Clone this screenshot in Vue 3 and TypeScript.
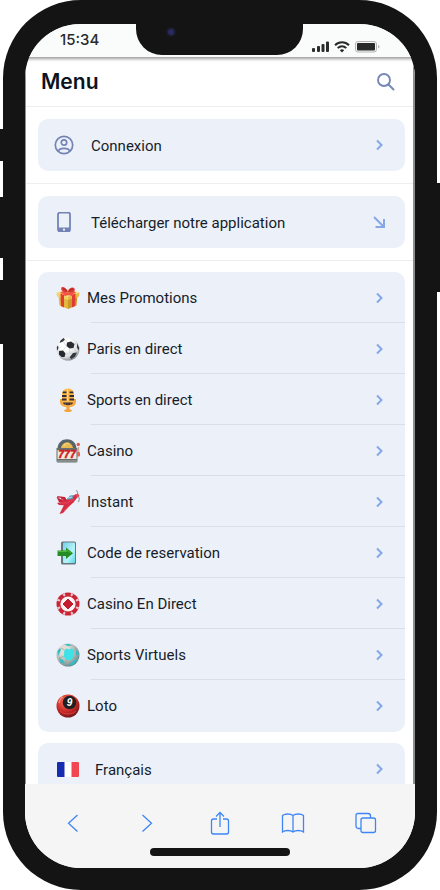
<script setup lang="ts">
interface MenuItem {
  icon: string
  label: string
}

const items: MenuItem[] = [
  { icon: 'gift', label: 'Mes Promotions' },
  { icon: 'football', label: 'Paris en direct' },
  { icon: 'mic', label: 'Sports en direct' },
  { icon: 'slots', label: 'Casino' },
  { icon: 'plane', label: 'Instant' },
  { icon: 'code', label: 'Code de reservation' },
  { icon: 'chip', label: 'Casino En Direct' },
  { icon: 'virtual', label: 'Sports Virtuels' },
  { icon: 'ball', label: 'Loto' },
]

const chipNotches: number[] = [0, 45, 90, 135, 180, 225, 270, 315]
</script>

<template>
  <div class="device">
    <span class="side-key mute"></span>
    <span class="side-key volume-up"></span>
    <span class="side-key volume-down"></span>
    <span class="side-key power"></span>

    <div class="frame">
      <div class="notch"><span class="camera"></span></div>

      <div class="status">
        <time class="clock">15:34</time>
        <div class="indicators">
          <svg width="17" height="12" viewBox="0 0 17 12" fill="#2b2b2b" aria-hidden="true">
            <rect x="0" y="7" width="3" height="4" rx="1" />
            <rect x="5" y="5" width="3" height="6" rx="1" />
            <rect x="9.5" y="3" width="3" height="8" rx="1" />
            <rect x="14" y="0.5" width="3" height="10.500" rx="1" />
          </svg>
          <svg width="16" height="12" viewBox="0 0 16 12" fill="none" stroke="#2b2b2b" stroke-width="2" aria-hidden="true">
            <path d="M1 4.200C5 0.200 11 0.200 15 4.200" />
            <path d="M3.700 7.100C6.200 4.600 9.800 4.600 12.300 7.100" />
            <path d="M5.800 9.200C7.200 8 8.800 8 10.200 9.200L8 11.500Z" fill="#2b2b2b" stroke="none" />
          </svg>
          <svg width="25" height="12" viewBox="0 0 25 12" aria-hidden="true">
            <rect x="0.500" y="0.500" width="21" height="10.500" rx="2.500" fill="#f4f4f1" stroke="#b5b5b5" />
            <rect x="2" y="2" width="18" height="7.500" rx="1" fill="#292929" />
            <path d="M23 4C25 4.500 25 7 23 7.500Z" fill="#b5b5b5" />
          </svg>
        </div>
      </div>

      <div class="page">
        <header class="header">
          <h1>Menu</h1>
          <button class="search" type="button" aria-label="Rechercher">
            <svg width="20" height="20" viewBox="0 0 20 20" fill="none" stroke="#7588b5" stroke-width="1.900" stroke-linecap="round">
              <circle cx="8" cy="8" r="6" />
              <path d="M12.500 12.500L17.500 17.500" />
            </svg>
          </button>
        </header>

        <main class="content">
          <section class="block">
            <a class="card action" href="#connexion">
              <svg class="action-icon" viewBox="0 0 20 20" fill="none" stroke="#7384b4" stroke-width="1.700">
                <circle cx="10" cy="10" r="8.700" />
                <circle cx="10" cy="7.500" r="2.700" />
                <path d="M4.300 16.200C5.500 12.400 14.500 12.400 15.700 16.200" />
              </svg>
              <span class="label">Connexion</span>
              <svg class="chevron" viewBox="0 0 12 12"><path d="M4 1.500L8.500 6L4 10.500" /></svg>
            </a>
          </section>

          <section class="block">
            <a class="card action" href="#application">
              <svg class="action-icon" viewBox="0 0 20 20">
                <rect x="4" y="0.500" width="12" height="19" rx="2" fill="none" stroke="#7384b4" stroke-width="1.800" />
                <path d="M4 15.500H16V18.500Q16 20 14.500 20H5.500Q4 20 4 18.500Z" fill="#7384b4" />
                <circle cx="10" cy="17.700" r="1.100" fill="#edf2fa" />
              </svg>
              <span class="label">Télécharger notre application</span>
              <svg class="chevron" viewBox="0 0 12 12"><path d="M1 1L11 11M11 3V11H2.500" /></svg>
            </a>
          </section>

          <section class="block lists">
            <nav class="card list">
              <a v-for="item in items" :key="item.label" class="row" :href="'#' + item.icon">
                <svg class="row-icon" viewBox="0 0 24 24" aria-hidden="true">
                  <g v-if="item.icon === 'gift'">
                    <path d="M2.500 9L12 12.500V23L3.500 19.500Z" fill="#e3b640" />
                    <path d="M12 12.500L21.500 9L20.500 19.500L12 23Z" fill="#c99829" />
                    <path d="M0.500 6.500L12 10.500V14L1 10.500Z" fill="#f3d067" />
                    <path d="M12 10.500L23.500 6.500L23 10.500L12 14Z" fill="#e6ba45" />
                    <path d="M0.500 6.500L12 3.500L23.500 6.500L12 10.500Z" fill="#f9dc79" />
                    <path d="M4.500 7.500L8 9V21.500L5 20ZM16 9L19.500 7.500L19 20L16 21.500Z" fill="#e33b32" />
                    <path d="M6 5.500L19 8.500L16 10L4 7ZM18 5L20 7L9 10L6.500 8.500Z" fill="#f05444" />
                    <path d="M12 6.500C8 7 4 4.500 5.500 1.500C7 0 10.500 2.500 12 5.500C12.500 2 17 0.500 18.500 2.500C20 5.500 16 7 12 6.500Z" fill="#dc3936" />
                    <path d="M7 3C8.500 2.500 10 4 11 5M17 3C15.500 3 14 4.500 13 5.500" fill="none" stroke="#9f2421" />
                  </g>
                  <g v-else-if="item.icon === 'football'">
                    <defs>
                      <radialGradient id="leather" cx="0.400" cy="0.300" r="0.750">
                        <stop offset="0.300" stop-color="#ffffff" />
                        <stop offset="0.750" stop-color="#d5d7da" />
                        <stop offset="1" stop-color="#777b80" />
                      </radialGradient>
                    </defs>
                    <circle cx="12" cy="12" r="11.500" fill="url(#leather)" />
                    <path d="M11 5.500L15 4.500L18.500 7L17.500 11L13.500 11.500L10.500 9Z" fill="#292d31" />
                    <path d="M3 14L7 13.500L9.500 16.500L8.500 20L5.500 20L3 17.500Z" fill="#25292d" />
                    <path d="M4.500 3.500L7.500 1L9 2.500L7 4.500L3.500 6ZM21 6L23.200 11L22.500 13.500L21 10.500ZM17 16L21 15.500L19 19.500L15.500 22L13.500 20.500ZM0.800 10L2 8.500L2.500 11L1 14Z" fill="#34383c" />
                    <path d="M10.500 9L7 13.500M17.500 11L21 15.500M13.500 11.500L14 16L9.500 16.500M14 16L17 16M11 5.500L9 2.500M18.500 7L21 6M7 4.500L10.500 9" stroke="#c2c5c8" stroke-width="0.500" fill="none" />
                  </g>
                  <g v-else-if="item.icon === 'mic'">
                    <path d="M10.500 19H13.500V21.500C17 21.500 17 24 12 24C7 24 7 21.500 10.500 21.500Z" fill="#f5a238" />
                    <path d="M4 11V14C4 21 20 21 20 14V11H17V16H7V11Z" fill="#f3a73d" />
                    <rect x="6" y="0.500" width="12" height="18" rx="5.500" fill="#ffb84c" />
                    <path d="M7 3.500H10.500V5.300H6.500ZM13.500 3.500H17L17.500 5.300H13.500ZM6 7H10.500V9H6ZM13.500 7H18V9H13.500ZM6 10.500H10.500V12.500H6ZM13.500 10.500H18V12.500H13.500Z" fill="#322c37" />
                    <path d="M7 14.500H17C17 18 7 18 7 14.500Z" fill="#372c34" />
                    <path d="M9.500 15V17M12 15V17.500M14.500 15V17" stroke="#a76530" stroke-width="0.700" />
                    <path d="M11.500 1V13" stroke="#ffdc83" />
                  </g>
                  <g v-else-if="item.icon === 'slots'">
                    <path d="M1.500 10C1.500 -3 20.500 -3 20.500 10Z" fill="#59636a" />
                    <path d="M5 9C6 1.500 16 1.500 17 9Z" fill="#eab951" />
                    <path d="M8 7.500C8.500 4.500 11 4 13 4.500" stroke="#ffe29a" fill="none" />
                    <path d="M0.500 9H21.500V22Q21.500 23.500 20 23.500H2Q0.500 23.500 0.500 22Z" fill="#65706f" />
                    <rect x="1.500" y="11" width="19" height="9" fill="#f0e6da" />
                    <path d="M1 22H21" stroke="#a9aaa4" />
                    <text x="11" y="19" text-anchor="middle" font-family="Liberation Sans" font-style="italic" font-size="10.500" font-weight="700" fill="#cc1f24" stroke="#cc1f24" stroke-width="0.500">777</text>
                    <path d="M22.500 8V15" stroke="#c8ae98" stroke-width="1.500" />
                    <circle cx="22.300" cy="5.500" r="1.700" fill="#de5653" />
                    <rect x="21" y="13" width="3" height="4.500" rx="1" fill="#e26558" />
                  </g>
                  <g v-else-if="item.icon === 'plane'">
                    <path d="M1 7L6 10L12 9L20 4L22.500 6L17 13L10 15.500L3 15L1 13L5 12Z" fill="#d72d43" />
                    <path d="M11 13L18 11.500L7 23L3.500 24L8 15Z" fill="#d52e43" />
                    <path d="M0.500 7L5 8L6 12L3 12ZM9 7L1 6L3 9L11 10.500Z" fill="#c32339" />
                    <path d="M10 10L14 5.500L18 5L16.500 9Z" fill="#699cb9" />
                    <path d="M12 8L16 7" stroke="#bfdbe5" />
                    <path d="M4 13L11 13L18 9" stroke="#ec5265" fill="none" stroke-width="0.700" />
                    <path d="M20 0.500C22 1 22 4 21 5M22 6C24 8 23.500 11 22 12" stroke="#9da0a6" stroke-width="1.200" fill="none" />
                    <circle cx="21.500" cy="5.500" r="1.700" fill="#e44b58" />
                    <path d="M14 15L8 21" stroke="#f0586a" stroke-width="0.700" />
                  </g>
                  <g v-else-if="item.icon === 'code'">
                    <defs>
                      <linearGradient id="glass" x1="0" y1="0" x2="1" y2="1">
                        <stop stop-color="#74cfea" />
                        <stop offset="0.600" stop-color="#b7f4f8" />
                        <stop offset="1" stop-color="#59d5e9" />
                      </linearGradient>
                    </defs>
                    <rect x="5" y="0.500" width="15" height="23" rx="1.500" fill="#65777f" />
                    <rect x="7" y="1.500" width="12" height="20.500" rx="1" fill="url(#glass)" />
                    <path d="M1.500 9.500H10V6.500L17 12.300L10 18V15H1.500Z" fill="#238d23" />
                    <path d="M2 10.500H11V9L15 12" fill="none" stroke="#4eb932" />
                  </g>
                  <g v-else-if="item.icon === 'chip'">
                    <circle cx="12" cy="12" r="11.500" fill="#c92435" />
                    <path v-for="angle in chipNotches" :key="angle" d="M10.700 0.600H13.300L12.800 3.500H11.200Z" fill="#ecc4c8" :transform="'rotate(' + (angle + 22) + ' 12 12)'" />
                    <circle cx="12" cy="12" r="7.600" fill="#fbf3f3" />
                    <path d="M12 7L17 12L12 17L7 12Z" fill="#c41d2e" stroke="#c41d2e" stroke-linejoin="round" />
                  </g>
                  <g v-else-if="item.icon === 'virtual'">
                    <defs>
                      <radialGradient id="virtual-shell" cx="0.350" cy="0.300" r="0.800">
                        <stop offset="0.250" stop-color="#e1ddd5" />
                        <stop offset="0.700" stop-color="#9ca7a5" />
                        <stop offset="1" stop-color="#477f87" />
                      </radialGradient>
                    </defs>
                    <circle cx="12" cy="12" r="11.500" fill="url(#virtual-shell)" />
                    <path d="M8.500 7L10.500 5.500L13 6.500L16 5L18 8L17.500 14L15 17.500L10.500 17L7.500 13.500Z" fill="#41e1e8" />
                    <path d="M1.500 8L4 5L5 7L2 13ZM3 15L7 17L9 20.500L5 20ZM15 20L20 16L21.500 17L18 21L13 23ZM21 6L23 11L21 13L19.500 10ZM8 1.500L13 1L16 2.500L12 3Z" fill="#30bdc8" />
                    <path d="M7.500 13.500L3 15M10.500 17L9 20.500M17.500 14L21.500 17M18 8L20 5M8.500 7L5 5" stroke="#8f9a97" stroke-width="0.600" />
                  </g>
                  <g v-else>
                    <defs>
                      <radialGradient id="red-ball" cx="0.400" cy="0.300" r="0.750">
                        <stop offset="0.200" stop-color="#f25945" />
                        <stop offset="0.650" stop-color="#bf2425" />
                        <stop offset="1" stop-color="#651718" />
                      </radialGradient>
                    </defs>
                    <circle cx="12" cy="12" r="11.500" fill="url(#red-ball)" />
                    <circle cx="13.500" cy="8.500" r="6.800" fill="#202022" />
                    <text x="13.500" y="12" text-anchor="middle" font-family="Liberation Sans" font-style="italic" font-size="10" font-weight="700" fill="#ffffff">9</text>
                    <path d="M3 9C4 5 5 4 7 3" stroke="#ff9482" stroke-width="1.200" fill="none" />
                    <path d="M4 17C8 21 16 21 20 17" stroke="#e04a3c" stroke-width="0.800" fill="none" />
                  </g>
                </svg>
                <span class="row-body">
                  <span class="label">{{ item.label }}</span>
                  <svg class="chevron" viewBox="0 0 12 12"><path d="M4 1.500L8.500 6L4 10.500" /></svg>
                </span>
              </a>
            </nav>

            <a class="card language" href="#langue">
              <svg class="flag" viewBox="0 0 22 15" aria-hidden="true">
                <rect width="22" height="15" rx="1" fill="#ffffff" />
                <path d="M1 0H7.500V15H1Q0 15 0 14V1Q0 0 1 0Z" fill="#172db1" />
                <path d="M14.500 0H21Q22 0 22 1V14Q22 15 21 15H14.500Z" fill="#f34653" />
              </svg>
              <span class="label">Français</span>
              <svg class="chevron" viewBox="0 0 12 12"><path d="M4 1.500L8.500 6L4 10.500" /></svg>
            </a>
          </section>
        </main>
      </div>

      <footer class="toolbar">
        <div class="tools">
          <button type="button" aria-label="Page précédente">
            <svg viewBox="0 0 24 24"><path d="M16.500 4L7.500 12.300L16.500 20.500" /></svg>
          </button>
          <button type="button" aria-label="Page suivante">
            <svg viewBox="0 0 24 24"><path d="M8.500 4L17.500 12.300L8.500 20.500" /></svg>
          </button>
          <button type="button" aria-label="Partager">
            <svg viewBox="0 0 24 24"><path d="M9 8H5.500Q3.500 8 3.500 10V21Q3.500 23 5.500 23H18.500Q20.500 23 20.500 21V10Q20.500 8 18.500 8H15M12 16V1.500M8 5.500L12 1.500L16 5.500" /></svg>
          </button>
          <button type="button" aria-label="Signets">
            <svg viewBox="0 0 24 24"><path d="M12 4.500C9.500 2.500 4 2.500 1.500 4.500V21C4 19 9.500 19 12 21C14.500 19 20 19 22.500 21V4.500C20 2.500 14.500 2.500 12 4.500V21" /></svg>
          </button>
          <button type="button" aria-label="Onglets">
            <svg viewBox="0 0 24 24"><rect x="7" y="7" width="14.500" height="14.500" rx="2" /><path d="M7 17.500H4.500Q2 17.500 2 15V4.500Q2 2.500 4 2.500H14Q16.500 2.500 16.500 5V7" /></svg>
          </button>
        </div>
        <span class="home"></span>
      </footer>
    </div>
  </div>
</template>

<style>
body {
  background: #ffffff;
}
</style>

<style scoped>
* {
  box-sizing: border-box;
}

.device {
  position: relative;
  height: 100vh;
  padding: 0 3px;
  font-family: Roboto, Inter, sans-serif;
  color: #161d29;
}

.side-key {
  position: absolute;
  left: 0;
  width: 4px;
  background: #141414;
}

.mute {
  top: 129px;
  height: 32px;
}

.volume-up {
  top: 197px;
  height: 61px;
}

.volume-down {
  top: 280px;
  height: 64px;
}

.power {
  top: 183px;
  right: 0;
  left: auto;
  height: 109px;
}

.frame {
  position: relative;
  display: flex;
  flex-direction: column;
  height: 100%;
  border: 22px solid #141414;
  border-top-width: 24px;
  border-radius: 78px;
  overflow: hidden;
  background: #ffffff;
}

.notch {
  position: absolute;
  z-index: 3;
  top: -1px;
  left: 50%;
  width: 167px;
  height: 32px;
  margin-left: -84px;
  border-radius: 0 0 26px 26px;
  background: #141414;
}

.camera {
  position: absolute;
  top: 4px;
  left: 30px;
  width: 10px;
  height: 10px;
  border: 2px solid #1b1c25;
  border-radius: 50%;
  background: #272a66;
}

.status {
  position: relative;
  z-index: 2;
  display: flex;
  flex: none;
  justify-content: space-between;
  height: 33px;
  padding: 0 35px;
  background: #fafcfb;
  box-shadow: 0 1px 3px 1px #9c9c9c;
}

.clock {
  padding-top: 6px;
  font: 500 15px/20px Inter, sans-serif;
  color: #2b2b2b;
}

.indicators {
  display: flex;
  gap: 5px;
  padding-top: 17px;
}

.page {
  flex: 1;
  min-height: 0;
  border-right: 2px solid #8d9091;
  border-left: 1px solid #909394;
  overflow: hidden;
}

.header {
  display: flex;
  align-items: center;
  justify-content: space-between;
  height: 50px;
  padding: 0 17px 0 15px;
  border-bottom: 1px solid #eceef0;
}

h1 {
  margin: 0;
  font: 600 21px/28px Inter, sans-serif;
  color: #0b131e;
}

button {
  display: flex;
  padding: 0;
  border: 0;
  background: none;
  cursor: pointer;
}

.block {
  padding: 12px 8px 12px 12px;
  border-bottom: 1px solid #eceef0;
}

.lists {
  display: grid;
  gap: 11px;
  padding-top: 11px;
}

.list {
  padding-bottom: 1px;
}

.card {
  border-radius: 10px;
  background: #ecf1f9;
}

a {
  color: inherit;
  text-decoration: none;
}

.action,
.language {
  display: flex;
  align-items: center;
  height: 52px;
  padding: 0 20px 0 16px;
}

.action-icon {
  width: 20px;
  height: 20px;
  margin-right: 17px;
}

.label {
  flex: 1;
  padding-top: 1px;
  font-size: 15px;
  line-height: 20px;
}

.chevron {
  flex: none;
  width: 12px;
  height: 12px;
  fill: none;
  stroke: #85a7e8;
  stroke-width: 2;
  overflow: visible;
}

.row {
  display: flex;
  align-items: center;
  height: 51px;
  padding-left: 18px;
}

.row-icon {
  flex: none;
  width: 24px;
  height: 24px;
}

.row-body {
  position: relative;
  display: flex;
  flex: 1;
  align-items: center;
  height: 51px;
  margin-left: 7px;
  padding-right: 20px;
}

.row:not(:last-child) .row-body::after {
  position: absolute;
  right: 0;
  bottom: 0;
  left: 4px;
  height: 1px;
  background: #d9dee8;
  content: "";
}

.flag {
  width: 22px;
  height: 15px;
  margin: 0 16px 0 3px;
}

.toolbar {
  z-index: 1;
  display: flex;
  flex: none;
  flex-direction: column;
  align-items: center;
  gap: 13px;
  height: 84px;
  padding-top: 27px;
  background: #f5f5f5;
}

.tools {
  display: flex;
  justify-content: space-between;
  width: 100%;
  padding: 0 37px 0 36px;
}

.tools svg {
  width: 24px;
  height: 24px;
  fill: none;
  stroke: #3f86f5;
  stroke-width: 1.3;
}

.home {
  width: 140px;
  height: 8px;
  border-radius: 4px;
  background: #141414;
}
</style>
